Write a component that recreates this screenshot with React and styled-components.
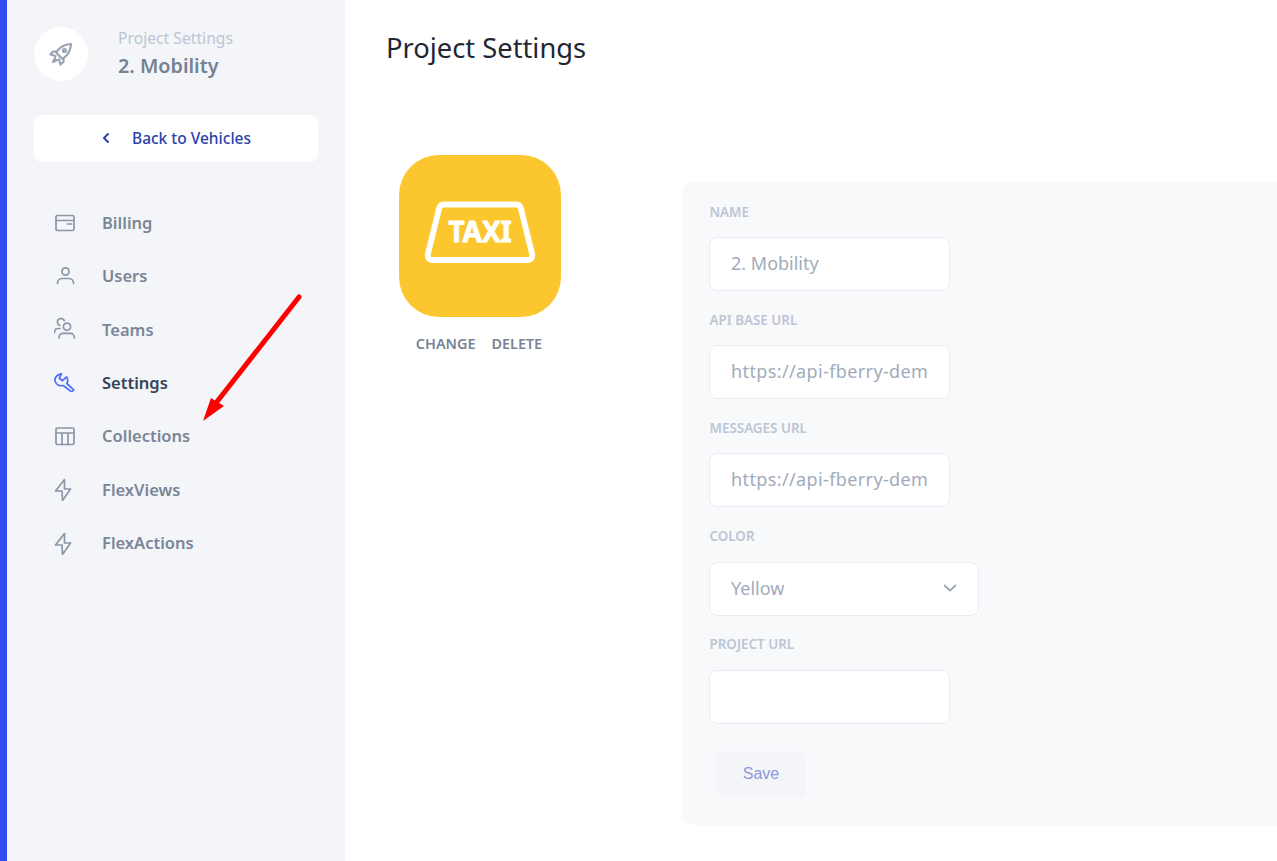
import React from "react";
import styled, { createGlobalStyle } from "styled-components";

const Global = createGlobalStyle`
  html, body { margin: 0; height: 100%; background: #fff; overflow: hidden; }
  #root { height: 100%; }
  * { box-sizing: border-box; }
`;
const font = `"Noto Sans", "Open Sans", sans-serif`;

const Page = styled.div`
  position: relative;
  display: flex;
  width: 1277px;
  height: 861px;
  overflow: hidden;
  font-family: ${font};
`;
const Sidebar = styled.aside`
  flex: 0 0 345px;
  display: flex;
  flex-direction: column;
  padding: 27px 27px 0 27px;
  background: #f3f5f9;
  border-left: 7px solid #2f4cf2;
`;
const Header = styled.div`
  display: flex;
  align-items: center;
  gap: 30px;
`;
const Avatar = styled.div`
  width: 54px;
  height: 54px;
  border-radius: 50%;
  background: #fff;
  display: flex;
  align-items: center;
  justify-content: center;
  color: #9aa3b2;
`;
const HeaderText = styled.div`
  display: flex;
  flex-direction: column;
  gap: 4px;
`;
const Eyebrow = styled.div`
  font-size: 15.7px;
  line-height: 20px;
  color: #bcc5d4;
`;
const ProjectName = styled.div`
  font-size: 19.8px;
  line-height: 28px;
  font-weight: 600;
  color: #758294;
`;
const BackButton = styled.button`
  margin-top: 34px;
  height: 47px;
  width: 284px;
  background: #fff;
  border: 0;
  border-radius: 8px;
  display: flex;
  align-items: center;
  justify-content: center;
  gap: 21px;
  padding: 0 0 2px 0;
  font: 500 15.5px ${font};
  color: #2a41ab;
`;
const Nav = styled.nav`
  margin-top: 34.5px;
  display: flex;
  flex-direction: column;
  padding-left: 20px;
`;
const NavItem = styled.div`
  height: 53.33px;
  display: flex;
  align-items: center;
  gap: 26px;
  font-size: 16.5px;
  font-weight: 600;
  padding-bottom: 1px;
  color: ${(p) => (p.$active ? "#354358" : "#7a8698")};
`;
const NavIcon = styled.svg`
  flex: none;
  width: 22px;
  height: 24px;
  fill: none;
  stroke: ${(p) => (p.$active ? "#4e6cf5" : "#8b96a7")};
  stroke-width: 1.7;
  stroke-linecap: round;
  stroke-linejoin: round;
`;
const Main = styled.main`
  flex: 1;
  min-width: 0;
  padding: 30px 0 0 41px;
`;
const Title = styled.h1`
  margin: 0;
  font-size: 27.3px;
  line-height: 36px;
  font-weight: 400;
  color: #1f2733;
`;
const Content = styled.div`
  margin-top: 89px;
  display: flex;
  align-items: flex-start;
`;
const LogoColumn = styled.div`
  flex: 0 0 296px;
  padding-left: 13px;
`;
const Tile = styled.div`
  width: 162px;
  height: 162px;
  border-radius: 40px;
  background: #fcc72e;
  display: flex;
  align-items: center;
  justify-content: center;
`;
const TileActions = styled.div`
  margin-top: 16.500px;
  width: 160px;
  display: flex;
  justify-content: center;
  gap: 16px;
`;
const TileAction = styled.span`
  font-size: 14.4px;
  line-height: 20px;
  font-weight: 600;
  color: #778496;
`;
const Panel = styled.section`
  margin-top: 27px;
  flex: 1;
  height: 643px;
  padding: 21px 0 0 27px;
  background: #f8f9fb;
  border-radius: 10px 0 0 10px;
`;
const Label = styled.label`
  display: block;
  height: 16px;
  margin: 0 0 18px 0.5px;
  padding-top: 0.6px;
  font-size: 13.4px;
  line-height: 16px;
  font-weight: 600;
  color: #bcc5d4;
`;
const Field = styled.div`
  margin-bottom: 20.2px;
`;
const boxCss = `
  display: block;
  height: 54px;
  background: #fff;
  border: 1px solid #e8ebf3;
  border-radius: 8px;
  padding: 0 21px 2px;
  font-family: ${font};
  font-size: 18px;
  color: #a1abbb;
`;
const Input = styled.input`
  ${boxCss}
  width: 241px;
  outline: none;
  letter-spacing: ${(p) => (p.$url ? "0.38px" : "0")};
`;
const SelectBox = styled.div`
  ${boxCss}
  width: 270px;
  display: flex;
  align-items: center;
  justify-content: space-between;
  padding-right: 20px;
`;
const SaveButton = styled.button`
  margin: 7px 0 0 7px;
  width: 90px;
  height: 46px;
  border: 0;
  border-radius: 8px;
  background: #f3f5f9;
  font: 400 16px "Liberation Sans", sans-serif;
  color: #8a99dc;
`;
const Annotation = styled.svg`
  position: absolute;
  left: 195px;
  top: 285px;
  width: 115px;
  height: 145px;
  pointer-events: none;
`;
const TaxiGraphic = styled.svg`
  margin-bottom: 7px;
`;

const icons = {
  billing: (
    <>
      <rect x="2" y="4.5" width="18" height="15" rx="1.5" />
      <path d="M2 9.5h18M13.5 13h4" />
    </>
  ),
  user: (
    <>
      <circle cx="11.5" cy="7.5" r="3.6" />
      <path d="M3.5 19.5v-.5c0-2.5 2-4.5 4.5-4.5h7c2.5 0 4.5 2 4.5 4.500v.5" />
    </>
  ),
  team: (
    <>
      <circle cx="13" cy="9.700" r="3.600" />
      <path d="M5 21v-.5C5 18 7 16.300 9 16.300h7.500c2 0 3.800 1.700 3.800 4.200v.5M5.800 8.500A3.600 3.600 0 1 1 10.300 3.700M6 11.500H4C2 11.500.5 13 .5 15.500" />
    </>
  ),
  wrench: (
    <path d="M7.500 2.800 5.300 7.300 8.500 9.700 12.500 5.800C14 8 14 10.500 12.800 12.500L19.800 18.800C19 20.300 17.500 20.800 16.200 19.800L9.300 14.500C5 15.500 1.500 13 1 9.500.6 6.200 3.500 3.300 7.500 2.800Z" />
  ),
  table: (
    <>
      <rect x="2" y="4" width="18" height="16.5" rx="1.5" />
      <path d="M2 9h18M8 9v11.500M14 9v11.500" />
    </>
  ),
  bolt: <path d="M10.500 2.500 1.500 14H8l.5 9.500 8-11.500h-6z" />,
};

const navItems = [
  ["Billing", "billing"],
  ["Users", "user"],
  ["Teams", "team"],
  ["Settings", "wrench", true],
  ["Collections", "table"],
  ["FlexViews", "bolt"],
  ["FlexActions", "bolt"],
];

function Rocket() {
  return (
    <svg width="24" height="24" viewBox="0 0 24 24" fill="none" stroke="currentColor" strokeWidth="2.2" strokeLinejoin="round" strokeLinecap="round">
      <path d="M22 2c-5 .5-9 2-11.500 4.500L7 10.500l6.500 6.500 4-3.500C20 11 21.500 7 22 2z" />
      <path d="M8 9.500H4L1.500 12.500l5 1.500M14.500 16v4L11.500 22.500 10 17.500" />
      <circle cx="15.500" cy="8.500" r="1.500" />
      <path d="M6 16l-2 4 4-2" />
    </svg>
  );
}

function TaxiSign() {
  return (
    <TaxiGraphic width="112" height="64" viewBox="0 0 112 64">
      <path
        d="M20 3.500h72c2.500 0 4 1.200 4.700 3.300L108 52.500c1 4-1 6.500-5 6.500H9c-4 0-6-2.500-5-6.500L15.300 6.800C16 4.700 17.500 3.500 20 3.500z"
        fill="none"
        stroke="#fff"
        strokeWidth="5.800"
        strokeLinejoin="round"
      />
      <text x="56" y="41" textAnchor="middle" fill="#fff" stroke="#fff" strokeWidth="0.8" fontFamily='"Noto Sans", sans-serif' fontWeight="700" fontSize="28">
        TAXI
      </text>
    </TaxiGraphic>
  );
}

function Chevron() {
  return (
    <svg width="16" height="10" viewBox="0 0 16 10" fill="none" stroke="#9aa4b4" strokeWidth="1.700" strokeLinecap="round" strokeLinejoin="round">
      <path d="M2.500 2.500l5.500 5 5.500-5" />
    </svg>
  );
}

function FormField({ label, value, url }) {
  return (
    <Field>
      <Label>{label}</Label>
      <Input readOnly value={value} $url={url} />
    </Field>
  );
}

export default function App() {
  return (
    <Page>
      <Global />
      <Sidebar>
        <Header>
          <Avatar>
            <Rocket />
          </Avatar>
          <HeaderText>
            <Eyebrow>Project Settings</Eyebrow>
            <ProjectName>2. Mobility</ProjectName>
          </HeaderText>
        </Header>
        <BackButton>
          <svg width="10" height="12" viewBox="0 0 10 12" fill="none" stroke="#2a41ab" strokeWidth="2" strokeLinecap="round" strokeLinejoin="round">
            <path d="M7 2L3 6l4 4" />
          </svg>
          Back to Vehicles
        </BackButton>
        <Nav>
          {navItems.map(([label, icon, active]) => (
            <NavItem key={label} $active={active}>
              <NavIcon viewBox="0 0 22 24" $active={active}>
                {icons[icon]}
              </NavIcon>
              {label}
            </NavItem>
          ))}
        </Nav>
      </Sidebar>
      <Main>
        <Title>Project Settings</Title>
        <Content>
          <LogoColumn>
            <Tile>
              <TaxiSign />
            </Tile>
            <TileActions>
              <TileAction>CHANGE</TileAction>
              <TileAction>DELETE</TileAction>
            </TileActions>
          </LogoColumn>
          <Panel>
            <FormField label="NAME" value="2. Mobility" />
            <FormField label="API BASE URL" value="https://api-fberry-demo.flexberry.io" url />
            <FormField label="MESSAGES URL" value="https://api-fberry-demo.flexberry.io" url />
            <Field>
              <Label>COLOR</Label>
              <SelectBox>
                Yellow
                <Chevron />
              </SelectBox>
            </Field>
            <FormField label="PROJECT URL" value="" />
            <SaveButton>Save</SaveButton>
          </Panel>
        </Content>
      </Main>
      <Annotation viewBox="0 0 115 145">
        <path d="M104 12 L21 118" stroke="#f00" strokeWidth="5" strokeLinecap="round" fill="none" />
        <path d="M8 136 L16 113 L29 121 Z" fill="#f00" />
      </Annotation>
    </Page>
  );
}
